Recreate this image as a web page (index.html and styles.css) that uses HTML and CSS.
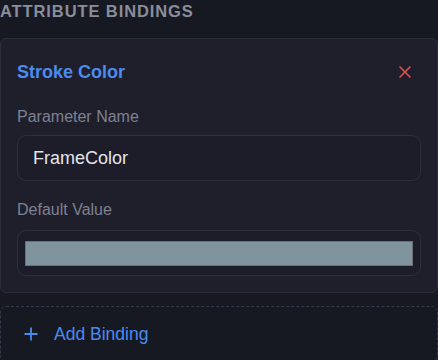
FILE: index.html
```html
<!DOCTYPE html>
<html lang="en">
<head>
    <meta charset="UTF-8">
    <meta name="viewport" content="width=device-width, initial-scale=1.0">
    <title>Attribute Bindings</title>
    <link rel="stylesheet" href="styles.css">
</head>
<body>
    <div class="panel">
        <!-- Section title -->
        <h3 class="section-title">Attribute Bindings</h3>

        <!-- Binding card -->
        <div class="binding-card">
            <div class="binding-header">
                <span class="binding-name">Stroke Color</span>
                <button class="remove-btn" title="Remove">
                    <svg width="12" height="12" viewBox="0 0 12 12">
                        <path d="M1 1 L11 11 M11 1 L1 11" stroke="#e0524f" stroke-width="1.6" stroke-linecap="round" fill="none"/>
                    </svg>
                </button>
            </div>

            <div class="field">
                <label class="field-label">Parameter Name</label>
                <div class="text-input">FrameColor</div>
            </div>

            <div class="field">
                <label class="field-label">Default Value</label>
                <div class="color-input">
                    <div class="color-swatch"></div>
                </div>
            </div>
        </div>

        <!-- Add binding -->
        <button class="add-binding-btn">
            <svg width="14" height="14" viewBox="0 0 14 14">
                <path d="M7 0.5 V13.5 M0.5 7 H13.5" stroke="#4b8bf0" stroke-width="1.8" fill="none"/>
            </svg>
            <span>Add Binding</span>
        </button>
    </div>
</body>
</html>
```

FILE: styles.css
```css
* {
    margin: 0;
    padding: 0;
    box-sizing: border-box;
}

body {
    font-family: "Liberation Sans", Arial, sans-serif;
    background-color: #171922;
    overflow: hidden;
}

.panel {
    width: 438px;
}

.section-title {
    padding-top: 1px;
    margin-bottom: 17px;
    font-size: 16.5px;
    line-height: 20px;
    font-weight: bold;
    letter-spacing: 0.9px;
    text-transform: uppercase;
    color: #8a8d9b;
}

.binding-card {
    background-color: #1e1f2b;
    border: 1px solid #2b2d3b;
    border-radius: 6px;
    padding: 21px 16px 16px 16px;
}

.binding-header {
    display: flex;
    align-items: center;
    justify-content: space-between;
    height: 24px;
    margin-bottom: 23px;
}

.binding-name {
    font-size: 18px;
    line-height: 24px;
    font-weight: bold;
    color: #4b8bf0;
}

.remove-btn {
    display: flex;
    align-items: center;
    justify-content: center;
    width: 24px;
    height: 24px;
    margin-right: 4px;
    background: none;
    border: none;
    cursor: pointer;
}

.field {
    margin-bottom: 19px;
}

.field:last-child {
    margin-bottom: 0;
}

.field-label {
    display: block;
    font-size: 16px;
    line-height: 20px;
    color: #7e8192;
    margin-bottom: 8px;
}

.text-input {
    display: flex;
    align-items: center;
    height: 46px;
    padding: 0 15px;
    border: 1px solid #2d2f3e;
    border-radius: 9px;
    background-color: #1c1d29;
    font-size: 18px;
    color: #e4e5ec;
}

.color-input {
    height: 46px;
    margin-top: 10px;
    padding: 10px 7px 9px 7px;
    border: 1px solid #2d2f3e;
    border-radius: 9px;
    background-color: #1c1d29;
}

.color-swatch {
    height: 100%;
    background-color: #7f949c;
    border: 1px solid #707074;
}

.add-binding-btn {
    display: flex;
    align-items: center;
    gap: 16px;
    width: 100%;
    height: 56px;
    margin-top: 13px;
    padding: 0 23px;
    background: none;
    border: 1px dashed #363949;
    border-radius: 6px;
    font-family: inherit;
    font-size: 17.5px;
    color: #4b8bf0;
    cursor: pointer;
}
```
